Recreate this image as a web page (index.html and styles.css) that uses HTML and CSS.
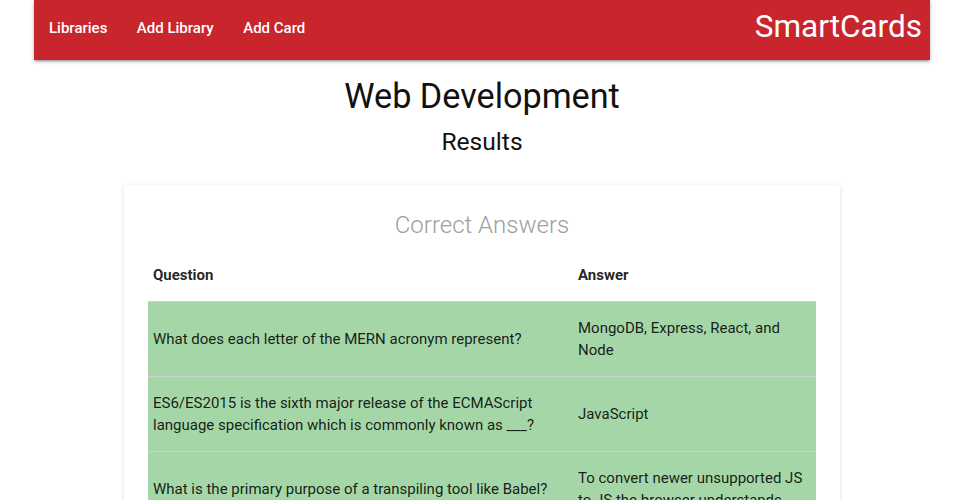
FILE: index.html
```html
<!DOCTYPE html>
<html>
<head>
<meta charset="utf-8">
<link rel="stylesheet" href="styles.css">
</head>
<body>
<div class="page">
  <nav class="nav">
    <ul class="nav-links">
      <li><a href="#">Libraries</a></li>
      <li><a href="#">Add Library</a></li>
      <li><a href="#">Add Card</a></li>
    </ul>
    <a class="brand" href="#">SmartCards</a>
  </nav>
  <h1 class="title">Web Development</h1>
  <h2 class="subtitle">Results</h2>
  <div class="card">
    <div class="card-title">Correct Answers</div>
    <table class="results">
      <thead>
        <tr><th class="col-q">Question</th><th>Answer</th></tr>
      </thead>
      <tbody>
        <tr class="correct"><td>What does each letter of the MERN acronym represent?</td><td>MongoDB, Express, React, and Node</td></tr>
        <tr class="correct"><td>ES6/ES2015 is the sixth major release of the ECMAScript language specification which is commonly known as ___?</td><td>JavaScript</td></tr>
        <tr class="correct"><td>What is the primary purpose of a transpiling tool like Babel?</td><td>To convert newer unsupported JS to JS the browser understands</td></tr>
      </tbody>
    </table>
  </div>
</div>
</body>
</html>
```
FILE: styles.css
```css
html, body {
  margin: 0;
  padding: 0;
  background: #fff;
}
body {
  font-family: Roboto, "Noto Sans", sans-serif;
  font-size: 15px;
  line-height: 1.5;
  color: rgba(0, 0, 0, 0.87);
}
.page {
  width: 896px;
  margin: 0 0 0 34px;
}
.nav {
  height: 60px;
  background: #c9252d;
  display: flex;
  align-items: flex-start;
  justify-content: space-between;
  box-shadow: 0 2px 2px 0 rgba(0,0,0,0.14), 0 3px 1px -2px rgba(0,0,0,0.12), 0 1px 5px 0 rgba(0,0,0,0.2);
  padding: 0 8px 0 0;
}
.nav-links {
  list-style: none;
  margin: 0;
  padding: 0;
  display: flex;
}
.nav-links a {
  display: block;
  padding: 0 14.5px 0 15px;
  line-height: 56px;
  color: #fff;
  text-decoration: none;
  font-size: 15px;
  font-weight: 500;
}
.brand {
  color: #fff;
  text-decoration: none;
  font-size: 31.5px;
  line-height: 54px;
  font-weight: 400;
}
.title {
  text-align: center;
  font-size: 34.2px;
  font-weight: 400;
  line-height: 38px;
  margin: 17px 0 0;
  color: #111;
}
.subtitle {
  text-align: center;
  font-size: 24.6px;
  font-weight: 400;
  line-height: 28px;
  margin: 13px 0 0;
  color: #111;
}
.card {
  width: 668px;
  margin: 29px 0 0 90px;
  padding: 24px 24px 0;
  background: #fff;
  border-radius: 2px;
  box-shadow: 0 2px 2px 0 rgba(0,0,0,0.08), 0 1px 5px 0 rgba(0,0,0,0.1);
}
.card-title {
  text-align: center;
  font-size: 24px;
  font-weight: 300;
  line-height: 32px;
  color: #9e9e9e;
  margin-bottom: 8px;
}
.results {
  width: 100%;
  border-collapse: collapse;
}
.results th, .results td {
  text-align: left;
  vertical-align: middle;
  padding: 15px 5px;
  line-height: 22px;
}
.results th {
  font-weight: 700;
  font-size: 15px;
}
.col-q {
  width: 415px;
}
.results thead tr {
  border-bottom: 1px solid #d0d0d0;
}
.results tbody tr {
  border-bottom: 1px solid #d0d0d0;
}
.correct {
  background: #a5d6a7;
}
```
